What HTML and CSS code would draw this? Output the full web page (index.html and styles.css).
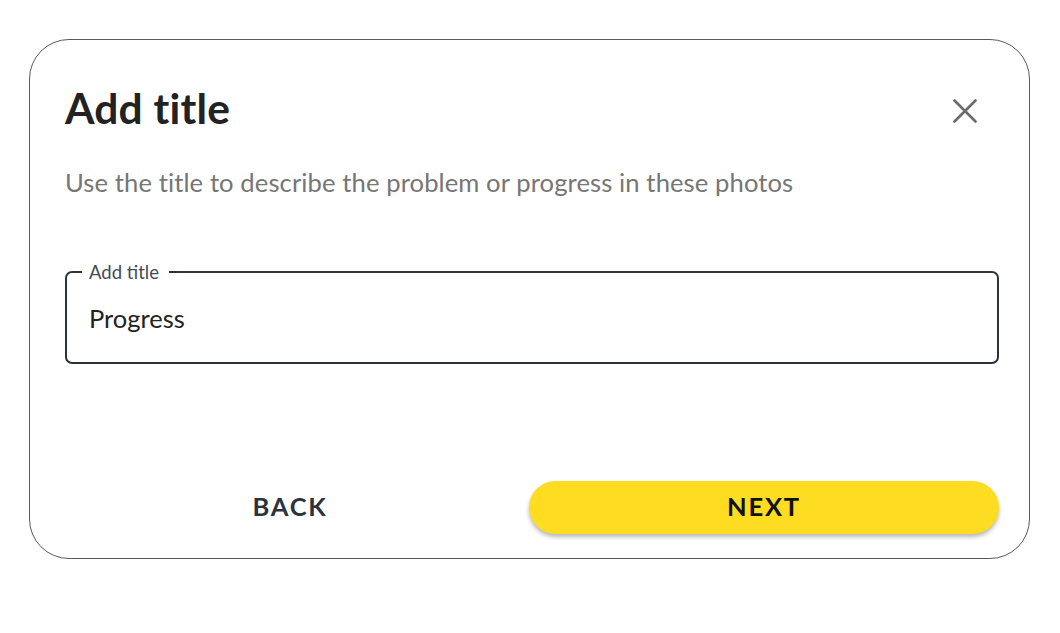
FILE: index.html
```html
<!DOCTYPE html>
<html>
<head>
<meta charset="utf-8">
<link rel="stylesheet" href="styles.css">
</head>
<body>
<div class="card">
  <div class="header">
    <h1 class="title">Add title</h1>
    <button class="close" aria-label="Close">
      <svg width="24" height="24" viewBox="0 0 24 24"><path d="M1.5 1.5L22.5 22.5M22.5 1.5L1.5 22.5" stroke="#6b6b6b" stroke-width="2.6" stroke-linecap="round"/></svg>
    </button>
  </div>
  <p class="subtitle">Use the title to describe the problem or progress in these photos</p>
  <fieldset class="field">
    <legend class="label">Add title</legend>
    <div class="value">Progress</div>
  </fieldset>
  <div class="actions">
    <button class="btn back">BACK</button>
    <button class="btn next">NEXT</button>
  </div>
</div>
</body>
</html>
```
FILE: styles.css
```css
html, body { margin: 0; padding: 0; background: #fff; }
body { font-family: "Lato", "Noto Sans", sans-serif; }
.card {
  box-sizing: border-box;
  margin: 39px 0 0 29px;
  width: 1001px;
  height: 520px;
  border: 1.5px solid #5a5a5a;
  border-radius: 40px;
  padding: 0 30px 0 35px;
  display: flex;
  flex-direction: column;
}
.header {
  display: flex;
  justify-content: space-between;
  align-items: center;
  margin-top: 42px;
  height: 50px;
}
.title {
  margin: 0;
  font-size: 42.5px;
  line-height: 51px;
  font-weight: 700;
  color: #222;
  letter-spacing: 0.2px;
}
.close {
  border: 0; background: none; padding: 0;
  width: 24px; height: 24px;
  margin-right: 22px;
  margin-top: 8px;
  display: flex;
}
.subtitle {
  margin: 35px 0 0 0;
  font-size: 25.6px;
  line-height: 31px;
  color: #767676;
  letter-spacing: 0.1px;
}
.field {
  margin: 64px 0 0 0;
  height: 102px;
  box-sizing: border-box;
  border: 2.5px solid #2c323d;
  border-radius: 7px;
  padding: 0 22px;
}
.label {
  padding: 0 10px 0 7px;
  margin-left: -7px;
  font-size: 18.5px;
  color: #454a55;
  line-height: 20px;
}
.value {
  margin-top: 21px;
  font-size: 25.5px;
  line-height: 31px;
  color: #222;
}
.actions {
  margin-top: auto;
  margin-bottom: 24px;
  display: flex;
  align-items: center;
}
.btn {
  font-family: inherit;
  border: 0;
  font-size: 25.5px;
  font-weight: 700;
  letter-spacing: 1.8px;
  height: 53px;
  padding: 0 0 4px 0;
  border-radius: 27px;
}
.back { flex: 1; background: none; color: #2b3340; margin-right: 14px; }
.next {
  width: 470px;
  background: #fddc22;
  color: #111;
  box-shadow: 0 3px 4px rgba(0,0,0,0.28);
}
```
